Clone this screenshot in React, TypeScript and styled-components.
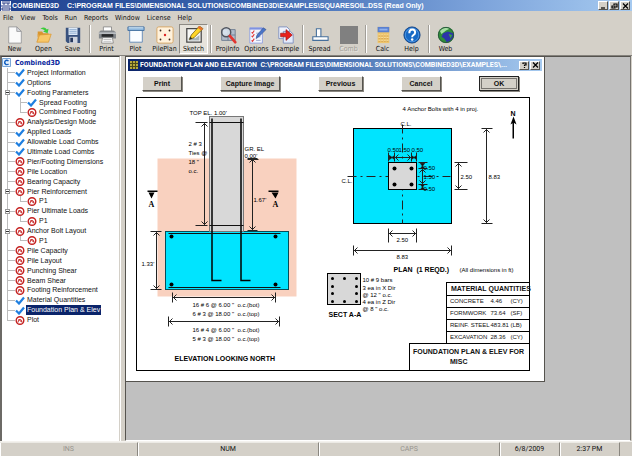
import React from 'react';
import styled, { createGlobalStyle, css } from 'styled-components';

const face = '#d4d0c8';
const navy = '#0a246a';
const tahoma = '"DejaVu Sans Condensed", "Liberation Sans", sans-serif';
const arial = '"Liberation Sans", Arial, sans-serif';

const GlobalStyle = createGlobalStyle`
  * { box-sizing: border-box; }
  html, body { margin: 0; height: 100%; }
  #root { height: 100vh; }
  body { background: ${face}; font: 7px/9px ${tahoma}; color: #111; overflow: hidden; }
  button { font: inherit; color: inherit; margin: 0; padding: 0; border: 0; background: none; white-space: nowrap; }
  svg { display: block; }
`;

const raised = css`
  background: ${face};
  border: 1px solid;
  border-color: #fff #55534e #55534e #fff;
`;

const Window = styled.div`
  display: flex;
  flex-direction: column;
  height: 100%;
`;

const TitleBar = styled.header`
  display: flex;
  align-items: center;
  flex: none;
  height: 11px;
  padding: 0 2px 0 1px;
  gap: 1px;
  background: linear-gradient(90deg, #20418f, #3b66b0 40%, #7ba2da 75%, #a6caf0);
`;

const WindowTitle = styled.h1`
  display: flex;
  gap: 8px;
  flex: 1;
  margin: 0;
  font: bold 7px/11px ${arial};
  color: #fff;
  white-space: pre;
`;

const CaptionButtons = styled.div`
  display: flex;
  flex: none;
  gap: 1px;
`;

const CaptionButton = styled.button`
  ${raised}
  display: flex;
  align-items: center;
  justify-content: center;
  width: 10px;
  height: 9px;
`;

const MenuBar = styled.nav`
  display: flex;
  flex: none;
  gap: 7px;
  height: 13px;
  padding: 1px 3px 0;
  line-height: 12px;
`;

const ToolBar = styled.div`
  display: flex;
  flex: none;
  height: 32px;
  padding-bottom: 1px;
  border-bottom: 1px solid #85827c;
`;

const ToolButton = styled.button<{ $active?: boolean }>`
  display: flex;
  flex-direction: column;
  align-items: center;
  gap: 1px;
  width: 29px;
  padding-top: 1px;
  line-height: 8px;
  border: 1px solid transparent;
  ${(p) => p.$active && css`
    background: #e6e3dc;
    border-color: #8d8a84 #fff #fff #8d8a84;
  `}
  &:disabled { color: #a09d97; text-shadow: 1px 1px #e8e6e1; }
`;

const Separator = styled.span`
  width: 5px;
  margin: 1px 0;
  background: linear-gradient(90deg, transparent 2px, #a19e98 2px, #a19e98 3px, #fff 3px, #fff 4px, transparent 4px);
`;

const Body = styled.div`
  display: flex;
  flex: 1;
  min-height: 0;
  padding-right: 1px;
`;

const TreePanel = styled.aside`
  flex: none;
  width: 120px;
  background: #fff;
  border-left: 2px solid #6c6a66;
  border-top: 1px solid #404040;
  border-right: 1px solid ${face};
`;

const Splitter = styled.div`
  flex: none;
  width: 5px;
  background: ${face};
  border-left: 1px solid #fff;
`;

const Tree = styled.ul`
  display: grid;
  grid-auto-rows: 1fr;
  height: 267px;
  margin: 1px 0 0;
  padding: 0;
  list-style: none;
  font: 7px/9px ${arial};
`;

const TreeRow = styled.li`
  display: flex;
  align-items: center;
  min-height: 0;
`;

const TrunkLine = styled.span<{ $last?: boolean; $branch: boolean }>`
  display: flex;
  align-items: center;
  flex: none;
  width: 13px;
  height: 100%;
  padding-left: 3px;
  background:
    linear-gradient(#bcbcbc, #bcbcbc) 5px 0 / 1px ${(p) => (p.$last ? '50%' : '100%')} no-repeat,
    linear-gradient(#bcbcbc, #bcbcbc) 5px 50% / ${(p) => (p.$branch ? '8px' : '0')} 1px no-repeat;
`;

const TwigLine = styled.span<{ $last: boolean }>`
  flex: none;
  width: 12px;
  height: 100%;
  background:
    linear-gradient(#bcbcbc, #bcbcbc) 5px 0 / 1px ${(p) => (p.$last ? '50%' : '100%')} no-repeat,
    linear-gradient(#bcbcbc, #bcbcbc) 5px 50% / 7px 1px no-repeat;
`;

const Expander = styled.button`
  display: flex;
  align-items: center;
  justify-content: center;
  width: 5px;
  height: 5px;
  background: #fff;
  border: 1px solid #9a9a9a;
  &::after { content: ''; width: 3px; height: 1px; background: #333; }
`;

const TreeLabel = styled.button<{ $selected?: boolean }>`
  padding: 0 1px;
  margin-left: 1px;
  line-height: 10px;
  ${(p) => p.$selected && css`background: ${navy}; color: #fff;`}
`;

const RootLabel = styled(TreeLabel)`
  font: bold 7px/10px ${tahoma};
  color: #0a1f9c;
  margin-left: 3px;
`;

const Desktop = styled.main`
  flex: 1;
  min-width: 0;
  background: #c0c0c0;
  border: 1px solid #55534e;
  border-right-color: #77746f;
  border-bottom: 1px solid #fff;
`;

const Dialog = styled.section`
  width: 418px;
  background: #fff;
  border: 1px solid #fff;
  outline: 1px solid #55534e;
  padding: 1px;
`;

const DialogTitleBar = styled.header`
  display: flex;
  align-items: center;
  height: 12px;
  padding: 0 2px;
  gap: 2px;
  background: linear-gradient(90deg, ${navy}, #3f68ac 45%, #a6caf0);
`;

const DialogTitle = styled.h2`
  flex: 1;
  min-width: 0;
  margin: 0;
  font: bold 7px/12px Roboto, ${arial};
  color: #fff;
  white-space: pre;
`;

const ButtonRow = styled.div`
  display: flex;
  justify-content: space-between;
  padding: 5px 23px 6px 14px;
`;

const buttonWidths = { small: '40px', medium: '45px', large: '60px' };

const PushButton = styled.button<{ $size?: keyof typeof buttonWidths; $default?: boolean }>`
  ${raised}
  width: ${(p) => buttonWidths[p.$size ?? 'small']};
  height: 15px;
  font: bold 7px/12px ${arial};
  box-shadow: 1px 1px #8a8780;
  ${(p) => p.$default && css`
    border-color: #222;
    outline: 1px solid #77746f;
    outline-offset: -3px;
  `}
`;

const Sheet = styled.div`
  position: relative;
  margin: 0 12px 8px 8px;
  border: 1px solid #000;
`;

const Drawing = styled.svg`
  width: 100%;
  height: auto;
  font: 6px ${arial};
  fill: #000;
  stroke: none;
`;

const SheetCorner = styled.div`
  position: absolute;
  right: 0;
  bottom: 0;
  display: flex;
  flex-direction: column;
  align-items: flex-end;
`;

const Quantities = styled.table`
  width: 83px;
  border-collapse: collapse;
  border-left: 1px solid #000;
  font: 6px/10px ${arial};
  white-space: nowrap;
  table-layout: fixed;

  th, td { height: 12px; padding: 0; text-align: left; font-weight: normal; border-top: 1px solid #000; }
  thead th { height: 13px; padding-left: 4px; font: bold 7px/10px ${arial}; }
  tbody th { padding-left: 3px; }
`;

const NameColumn = styled.col`
  width: 44px;
`;

const AmountColumn = styled.col`
  width: 20px;
`;

const TitleBlock = styled.div`
  width: 120px;
  height: 27px;
  padding: 3px 2px 0;
  background: #fff;
  border: solid #000;
  border-width: 1px 0 0 1px;
  font: bold 7px/10px ${arial};
  white-space: nowrap;
`;

const TitleLine = styled.div<{ $indent?: boolean }>`
  padding-left: ${(p) => (p.$indent ? '38px' : '1px')};
`;

const StatusLine = styled.footer`
  display: grid;
  grid-template-columns: 138fr 181fr 181fr 60fr 60fr 12fr;
  flex: none;
  height: 15px;
  border-top: 1px solid #f4f2ee;
`;

const StatusCell = styled.span<{ $dim?: boolean }>`
  border: solid;
  border-width: 1px 1px 1px 0;
  border-color: #eceae5 #8a8780 #8a8780;
  box-shadow: inset 1px 0 #fff;
  text-align: center;
  font: 7px/13px Roboto, ${arial};
  color: ${(p) => (p.$dim ? '#97948e' : '#111')};
`;

/* ---------- icons ---------- */

const ToolIcon = ({ children }: { children: React.ReactNode }) => (
  <svg width="20" height="20" viewBox="0 0 20 20" aria-hidden="true">{children}</svg>
);

const icons: Record<string, React.ReactNode> = {
  New: <>
    <path d="M3 1h9l5 5v13H3z" fill="#fafafa" stroke="#9a9a9c" />
    <path d="M12 1v5h5z" fill="#d9dce2" stroke="#9a9a9c" />
  </>,
  Open: <>
    <path d="M3 6h5l1 2h6v4H3z" fill="#d9962f" />
    <path d="M2 18l3-8 13-1-3 9z" fill="#f8c768" stroke="#d9962f" strokeWidth=".8" />
    <path d="M3 9v9l2-8z" fill="#e3a544" />
    <path d="M6 3q5-3 7 1l2-1-1 5-5-2 2-1q-2-2-5-2z" fill="#3ccc3c" />
  </>,
  Save: <>
    <path d="M2 2h16v17H4l-2-2z" fill="#39527e" />
    <path d="M5 2h10v8H5z" fill="#dce8f6" />
    <path d="M6 4h8M6 6h8M6 8h8" stroke="#91aed0" />
    <path d="M6 12h9v7H6z" fill="#cfd4de" />
    <path d="M7 13h3v5H7z" fill="#26385c" />
  </>,
  Print: <>
    <path d="M6 1h9v6H6z" fill="#fff" stroke="#777" strokeWidth=".8" />
    <path d="M1 7l2-2h14l3 2v7H1z" fill="#82868a" />
    <path d="M1 7h19v2H1z" fill="#b8bcc0" />
    <path d="M4 9h13v3H4z" fill="#26282a" />
    <path d="M5 13h11l1 6H4z" fill="#fff" stroke="#777" strokeWidth=".8" />
    <path d="M6 15h9M6 17h9" stroke="#aaa" strokeWidth=".8" />
  </>,
  Plot: <>
    <path d="M3 4h14v14H3z" fill="#fbfdff" stroke="#5f87b5" />
    <path d="M1 1h18v4H1z" fill="#8db6dc" stroke="#436f9f" />
    <path d="M2 2h16" stroke="#dceefb" />
  </>,
  PilePlan: <>
    <rect x="1" y="1" width="18" height="18" rx="2" fill="#fff2dc" stroke="#d8a45e" />
    <g fill="#40281c"><circle cx="5" cy="5" r="1" /><circle cx="15" cy="5" r="1" /><circle cx="5" cy="15" r="1" /><circle cx="15" cy="15" r="1" /></g>
    <circle cx="10" cy="10" r="1.3" fill="#d22" />
  </>,
  Sketch: <>
    <path d="M2 3h16v15H2z" fill="#f8f8f6" stroke="#474747" strokeWidth="1.4" />
    <path d="M4 14l4-5 3 5 5-4v6H4z" fill="#a9b4ba" />
    <path d="M5 15l2-5L16 0l4 3-10 10z" fill="#ffd528" stroke="#66500c" strokeWidth=".8" />
    <path d="M16 0l4 3-2 2-4-3z" fill="#e5702c" />
    <path d="M5 15l1-3 2 2z" fill="#222" />
  </>,
  ProjInfo: <>
    <path d="M3 4h15v12H3z" fill="#b1bdcc" stroke="#6c7b8e" />
    <path d="M10 4v12M3 10h15" stroke="#6c7b8e" />
    <circle cx="8" cy="7" r="5" fill="#e0eaf4" fillOpacity=".8" stroke="#50555f" strokeWidth="1.7" />
    <path d="M12 11l6 7" stroke="#e2352f" strokeWidth="3" strokeLinecap="round" />
  </>,
  Options: <>
    <path d="M2 2h14v17H2z" fill="#f3f6fe" stroke="#8e9fe0" />
    <path d="M2 2h14v2H2z" fill="#7f92e0" />
    <path d="M4 7l1 1 2-3M4 11l1 1 2-3M4 16l1 1 2-3" fill="none" stroke="#e23838" strokeWidth="1.2" />
    <path d="M9 8h5M9 12h5M9 16h5" stroke="#98a6cb" />
    <path d="M9 14l1-4 7-8 3 2-8 8z" fill="#4974c8" stroke="#2b4480" strokeWidth=".6" />
  </>,
  Example: <>
    <path d="M2 1h9l3 3v10H2z" fill="#eef2fc" stroke="#7e8fc0" />
    <path d="M7 6h8l3 3v10H7z" fill="#e3eafa" stroke="#7e8fc0" />
    <path d="M4 8h6V4l7 6-7 6v-4H4z" fill="#e8201c" stroke="#9c0f0c" strokeWidth=".7" />
  </>,
  Spread: <path d="M6 3h5v9h8v4H2v-4h4zM6 12h5" fill="#fff" stroke="#466f9c" strokeWidth="1.2" />,
  Comb: <path d="M0 0h20v20H0z" fill="#808080" />,
  Calc: <>
    <path d="M4 1h13v18H4z" fill="#eec56d" />
    <path d="M4 1h13v6H4z" fill="#5a80d0" />
    <path d="M6 3h9v2H6z" fill="#90b1ee" />
    <path d="M5 10h11M5 13h11M5 16h11" stroke="#fae3a8" strokeDasharray="2 1" />
    <path d="M5 11h11M5 14h11M5 17h11" stroke="#ca9440" strokeWidth=".7" strokeDasharray="2 1" />
  </>,
  Help: <>
    <circle cx="10" cy="10" r="9" fill="#1769c5" stroke="#123f80" />
    <circle cx="10" cy="10" r="7.5" fill="none" stroke="#6daef0" strokeWidth=".7" />
    <path d="M7 8q0-4 3.2-4T13.5 7.2q0 1.8-2 2.8-1.3.7-1.3 2.5" fill="none" stroke="#fff" strokeWidth="2.2" />
    <circle cx="10.2" cy="15" r="1.4" fill="#fff" />
  </>,
  Web: <>
    <circle cx="10" cy="10" r="9" fill="#2f8f38" />
    <path d="M7 8l5-2 6 2 1 3-4 5-4 2-3-4-3-2z" fill="#2c35a8" />
    <path d="M3 5q5-5 11-2l-4 2-5 4z" fill="#a4dca2" />
    <path d="M13 9l4 1-2 4z" fill="#3aa044" />
    <circle cx="10" cy="10" r="8.5" fill="none" stroke="#28523c" />
  </>,
};

const TickIcon = () => (
  <svg width="10" height="9" viewBox="0 0 10 9" role="img" aria-label="Complete">
    <path d="M1 4.5l3 3 5-6" fill="none" stroke="#1f7fe0" strokeWidth="2.2" />
  </svg>
);

const StopIcon = () => (
  <svg width="10" height="9" viewBox="0 0 10 9" role="img" aria-label="Unavailable">
    <circle cx="5" cy="4.5" r="3.8" fill="#fff" stroke="#c4201f" strokeWidth="1.4" />
    <path d="M3 6.5q0-3 2-3t2 3M3.5 3l3 3" fill="none" stroke="#c4201f" />
  </svg>
);

const AppIcon = () => (
  <svg width="10" height="10" viewBox="0 0 10 10" aria-hidden="true">
    <path d="M0 0h10v10H0z" fill="#f4f6fb" />
    <path d="M2 0v3h2V0M6 0v3h2V0M0 5h10M1 7h8v2H1z" fill="none" stroke="#2b3d86" />
  </svg>
);

const RootIcon = () => (
  <svg width="9" height="9" viewBox="0 0 9 9" aria-hidden="true">
    <path d="M.5.5h8v8h-8z" fill="#e4f0fc" stroke="#7ba7d8" />
    <path d="M6.5 3Q4.5 1.5 3 3.3 2 5.5 4 6.5q1.5.5 2.5-.6" fill="none" stroke="#1560c0" strokeWidth="1.4" />
  </svg>
);

const PlanIcon = () => (
  <svg width="8" height="8" viewBox="0 0 8 8" aria-hidden="true">
    <path d="M0 0h8v8H0z" fill="#b5a93c" />
    <path d="M0 2.5h8M0 5.5h8M2.5 0v8M5.5 0v8" stroke="#4d4b18" />
  </svg>
);

const Glyph = ({ d }: { d: string }) => (
  <svg width="7" height="6" viewBox="0 0 7 6" aria-hidden="true">
    <path d={d} fill="none" stroke="#000" strokeWidth="1.2" />
  </svg>
);
const crossPath = 'M1 .5l5 5M6 .5l-5 5';

/* ---------- engineering drawing ---------- */

const head = 4;

/** Vertical dimension line with arrow heads and extension ticks. */
const VDim = ({ x, y1, y2, t1 = x - 5, t2 = x + 5 }: { x: number; y1: number; y2: number; t1?: number; t2?: number }) => (
  <path
    d={`M${x} ${y1}V${y2}M${t1} ${y1}H${t2}M${t1} ${y2}H${t2}M${x - 3} ${y1 + head}L${x} ${y1 + 1}L${x + 3} ${y1 + head}M${x - 3} ${y2 - head}L${x} ${y2 - 1}L${x + 3} ${y2 - head}`}
  />
);

/** Horizontal dimension line with arrow heads and extension ticks. */
const HDim = ({ y, x1, x2, t1 = y - 5, t2 = y + 5 }: { y: number; x1: number; x2: number; t1?: number; t2?: number }) => (
  <path
    d={`M${x1} ${y}H${x2}M${x1} ${t1}V${t2}M${x2} ${t1}V${t2}M${x1 + head} ${y - 3}L${x1 + 1} ${y}L${x1 + head} ${y + 3}M${x2 - head} ${y - 3}L${x2 - 1} ${y}L${x2 - head} ${y + 3}`}
  />
);

const Linework = styled.g`
  fill: none;
  stroke: #222;
  stroke-width: 1px;
`;

const Heading = styled.text`
  font: bold 7px ${arial};
`;

const CutMark = styled.text`
  font: bold 8px "Liberation Serif", serif;
`;

const Elevation = () => (
  <g>
    <rect x="157" y="158" width="139" height="138" fill="#f9d1bf" />
    <rect x="165" y="231" width="123" height="58" fill="#00e4ff" stroke="#064d58" shapeRendering="crispEdges" />
    <rect x="209" y="116" width="34" height="115" fill="#d8d8d8" stroke="#777" shapeRendering="crispEdges" />
    <Linework>
      <path d="M211.5 118V280H221M240.5 118V280H250" stroke="#000" strokeWidth="1.5" />
      <path d="M209 122H243M209 225H243M168 233H280M168 287H280" stroke="#111" />
      <VDim x={204} y1={122} y2={225} t1={195} t2={207} />
      <VDim x={252} y1={158} y2={230} t1={247} t2={257} />
      <path d="M247 159H258" />
      <VDim x={156} y1={231} y2={289} t1={150} t2={161} />
      <HDim y={297} x1={172} x2={275} />
      <HDim y={321} x1={168} x2={279} />
    </Linework>
    <circle cx="171" cy="236" r="2" /><circle cx="275" cy="236" r="2" />
    <circle cx="171" cy="284" r="2" /><circle cx="275" cy="284" r="2" />
    <path d="M147 190h10v1.5h-10zM148 192h6l-3 6zM268 190h10v1.5h-10zM271 192h7l-3 6z" />
    <CutMark x="148" y="206">A</CutMark>
    <CutMark x="272" y="206">A</CutMark>
    <text x="189" y="114">TOP EL. 1.00'</text>
    <text x="188" y="145">2 # 3</text>
    <text x="188" y="154">Ties @</text>
    <text x="188" y="163">18 "</text>
    <text x="188" y="172">o.c.</text>
    <text x="244" y="150">GR. EL</text>
    <text x="244" y="157">0.00'</text>
    <text x="253" y="201">1.67'</text>
    <text x="141" y="265">1.33'</text>
    <text x="192" y="306" xmlSpace="preserve">16 # 6 @ 6.00 "  o.c.(bot)</text>
    <text x="192" y="315" xmlSpace="preserve">6 # 3 @ 18.00 "  o.c.(top)</text>
    <text x="192" y="331" xmlSpace="preserve">16 # 4 @ 6.00 "  o.c.(bot)</text>
    <text x="192" y="340" xmlSpace="preserve">5 # 3 @ 18.00 "  o.c.(top)</text>
    <Heading x="174" y="360">ELEVATION LOOKING NORTH</Heading>
  </g>
);

const Plan = () => (
  <g>
    <rect x="353" y="128" width="98" height="95" fill="#00e4ff" stroke="#000" shapeRendering="crispEdges" />
    <Linework>
      <path d="M402 124V223M347 176H450" strokeDasharray="9 4 2 4" />
    </Linework>
    <rect x="388" y="162" width="28" height="27" fill="#d8d8d8" stroke="#000" shapeRendering="crispEdges" />
    <circle cx="394" cy="168" r="2" /><circle cx="411" cy="168" r="2" />
    <circle cx="394" cy="184" r="2" /><circle cx="411" cy="184" r="2" />
    <Linework>
      <path d="M388 157H416M388 152V161M394 152V161M411 152V161M416 152V161M398 154L395 157L398 160M407 154L410 157L407 160" />
      <path d="M389 155l5 4v-4l-5 4zM411 155l5 4v-4l-5 4z" fill="#111" />
      <path d="M422 162V189M418 162H427M418 168H427M418 184H427M418 189H427M419 172L422 169L425 172M419 180L422 183L425 180" />
      <path d="M420 163h4l-4 5h4zM420 184h4l-4 5h4z" fill="#111" />
      <VDim x={458} y1={162} y2={189} t1={454} t2={467} />
      <VDim x={486} y1={128} y2={223} t1={481} t2={492} />
      <HDim y={233} x1={388} x2={416} t1={228} t2={242} />
      <HDim y={250} x1={353} x2={451} t1={245} t2={255} />
    </Linework>
    <path d="M510 124l3-8 3 8-3-2zM512 120h1.5v18h-1.500z" />
    <Heading x="510" y="115">N</Heading>
    <text x="402" y="110">4 Anchor Bolts with 4 in proj.</text>
    <text x="400" y="125">C.L.</text>
    <text x="341" y="182">C.L.</text>
    <text x="387" y="151">0.50</text>
    <text x="398" y="151">1.50</text>
    <text x="411" y="151">0.50</text>
    <text x="423" y="169">0.50</text>
    <text x="423" y="178">1.50</text>
    <text x="423" y="190">0.50</text>
    <text x="460" y="178">2.50</text>
    <text x="488" y="178">8.83</text>
    <text x="396" y="241">2.50</text>
    <text x="396" y="258">8.83</text>
    <Heading x="393" y="271" xmlSpace="preserve">PLAN  (1 REQD.)</Heading>
    <text x="459" y="271">(All dimensions in ft)</text>
  </g>
);

const bars: [number, number][] = [
  [332, 278], [344, 278], [356, 278], [332, 286], [356, 286],
  [332, 293], [356, 293], [332, 301], [344, 301], [356, 301],
];

const Section = () => (
  <g>
    <rect x="327" y="273" width="33" height="31" fill="#d8d8d8" stroke="#000" shapeRendering="crispEdges" />
    {bars.map(([x, y]) => <circle key={`${x}-${y}`} cx={x} cy={y} r="1.5" />)}
    <text x="362" y="281">10 # 9 bars</text>
    <text x="362" y="289">3 ea in X Dir</text>
    <text x="362" y="296" xmlSpace="preserve">@ 12 " o.c.</text>
    <text x="362" y="303">4 ea in Z Dir</text>
    <text x="362" y="310" xmlSpace="preserve">@ 8 " o.c.</text>
    <Heading x="328" y="316">SECT A-A</Heading>
  </g>
);

/* ---------- data ---------- */

type Node = { label: string; done?: boolean; children?: Node[] };

const tree: Node[] = [
  { label: 'Project Information', done: true },
  { label: 'Options', done: true },
  { label: 'Footing Parameters', done: true, children: [{ label: 'Spread Footing', done: true }, { label: 'Combined Footing' }] },
  { label: 'Analysis/Design Mode' },
  { label: 'Applied Loads', done: true },
  { label: 'Allowable Load Combs', done: true },
  { label: 'Ultimate Load Combs', done: true },
  { label: 'Pier/Footing Dimensions' },
  { label: 'Pile Location' },
  { label: 'Bearing Capacity' },
  { label: 'Pier Reinforcement', children: [{ label: 'P1' }] },
  { label: 'Pier Ultimate Loads', children: [{ label: 'P1' }] },
  { label: 'Anchor Bolt Layout', children: [{ label: 'P1' }] },
  { label: 'Pile Capacity' },
  { label: 'Pile Layout' },
  { label: 'Punching Shear' },
  { label: 'Beam Shear' },
  { label: 'Footing Reinforcement' },
  { label: 'Material Quantities', done: true },
  { label: 'Foundation Plan & Elev', done: true },
  { label: 'Plot' },
];

const selected = 'Foundation Plan & Elev';
const menus = ['File', 'View', 'Tools', 'Run', 'Reports', 'Window', 'License', 'Help'];
const toolGroups = [
  ['New', 'Open', 'Save'],
  ['Print', 'Plot', 'PilePlan', 'Sketch'],
  ['ProjInfo', 'Options', 'Example'],
  ['Spread', 'Comb'],
  ['Calc', 'Help'],
  ['Web'],
];
const quantities = [
  ['CONCRETE', '4.46', '(CY)'],
  ['FORMWORK', '73.64', '(SF)'],
  ['REINF. STEEL', '483.81', '(LB)'],
  ['EXCAVATION', '28.36', '(CY)'],
];

const TreeItem = ({ node, last }: { node: Node; last: boolean }) => (
  <>
    <TreeRow>
      <TrunkLine $last={last} $branch>{node.children && <Expander aria-label={`Collapse ${node.label}`} />}</TrunkLine>
      {node.done ? <TickIcon /> : <StopIcon />}
      <TreeLabel $selected={node.label === selected}>{node.label}</TreeLabel>
    </TreeRow>
    {node.children?.map((child, i) => (
      <TreeRow key={child.label}>
        <TrunkLine $branch={false} />
        <TwigLine $last={i === node.children!.length - 1} />
        {child.done ? <TickIcon /> : <StopIcon />}
        <TreeLabel>{child.label}</TreeLabel>
      </TreeRow>
    ))}
  </>
);

export default function App() {
  return (
    <>
      <GlobalStyle />
      <Window>
        <TitleBar>
          <AppIcon />
          <WindowTitle>
            <span>COMBINED3D</span>
            <span>C:\PROGRAM FILES\DIMENSIONAL SOLUTIONS\COMBINED3D\EXAMPLES\SQUARESOIL.DSS (Read Only)</span>
          </WindowTitle>
          <CaptionButtons>
            <CaptionButton aria-label="Minimize"><Glyph d="M1 5h4" /></CaptionButton>
            <CaptionButton aria-label="Restore"><Glyph d="M3 2V1h3v3H5M1 3h3v2H1z" /></CaptionButton>
            <CaptionButton aria-label="Close"><Glyph d={crossPath} /></CaptionButton>
          </CaptionButtons>
        </TitleBar>
        <MenuBar>{menus.map((m) => <button key={m}>{m}</button>)}</MenuBar>
        <ToolBar role="toolbar">
          {toolGroups.map((group, i) => (
            <React.Fragment key={group[0]}>
              {i > 0 && <Separator />}
              {group.map((name) => (
                <ToolButton key={name} $active={name === 'Sketch'} disabled={name === 'Comb'}>
                  <ToolIcon>{icons[name]}</ToolIcon>
                  {name}
                </ToolButton>
              ))}
            </React.Fragment>
          ))}
        </ToolBar>
        <Body>
          <TreePanel>
            <Tree>
              <TreeRow><RootIcon /><RootLabel>Combined3D</RootLabel></TreeRow>
              {tree.map((n, i) => <TreeItem key={n.label} node={n} last={i === tree.length - 1} />)}
            </Tree>
          </TreePanel>
          <Splitter />
          <Desktop>
            <Dialog role="dialog" aria-labelledby="dialog-title">
              <DialogTitleBar>
                <PlanIcon />
                <DialogTitle id="dialog-title">{'FOUNDATION PLAN AND ELEVATION  C:\\PROGRAM FILES\\DIMENSIONAL SOLUTIONS\\COMBINED3D\\EXAMPLES\\...'}</DialogTitle>
                <CaptionButtons>
                  <CaptionButton aria-label="Help"><Glyph d="M2 2V1h3v2H3.5v1M3.5 5v1" /></CaptionButton>
                  <CaptionButton aria-label="Close dialog"><Glyph d={crossPath} /></CaptionButton>
                </CaptionButtons>
              </DialogTitleBar>
              <ButtonRow>
                <PushButton>Print</PushButton>
                <PushButton $size="large">Capture Image</PushButton>
                <PushButton $size="medium">Previous</PushButton>
                <PushButton>Cancel</PushButton>
                <PushButton $default>OK</PushButton>
              </ButtonRow>
              <Sheet>
                <Drawing viewBox="136.5 97.5 392 272" role="img" aria-label="Foundation plan and elevation">
                  <Elevation />
                  <Plan />
                  <Section />
                </Drawing>
                <SheetCorner>
                  <Quantities>
                    <colgroup><NameColumn /><AmountColumn /><col /></colgroup>
                    <thead><tr><th colSpan={3}>MATERIAL QUANTITIES</th></tr></thead>
                    <tbody>
                      {quantities.map(([name, amount, unit]) => (
                        <tr key={name}><th scope="row">{name}</th><td>{amount}</td><td>{unit}</td></tr>
                      ))}
                    </tbody>
                  </Quantities>
                  <TitleBlock>
                    <TitleLine>FOUNDATION PLAN &amp; ELEV FOR</TitleLine>
                    <TitleLine $indent>MISC</TitleLine>
                  </TitleBlock>
                </SheetCorner>
              </Sheet>
            </Dialog>
          </Desktop>
        </Body>
        <StatusLine>
          <StatusCell $dim>INS</StatusCell>
          <StatusCell>NUM</StatusCell>
          <StatusCell $dim>CAPS</StatusCell>
          <StatusCell>6/8/2009</StatusCell>
          <StatusCell>2:37 PM</StatusCell>
          <span />
        </StatusLine>
      </Window>
    </>
  );
}
